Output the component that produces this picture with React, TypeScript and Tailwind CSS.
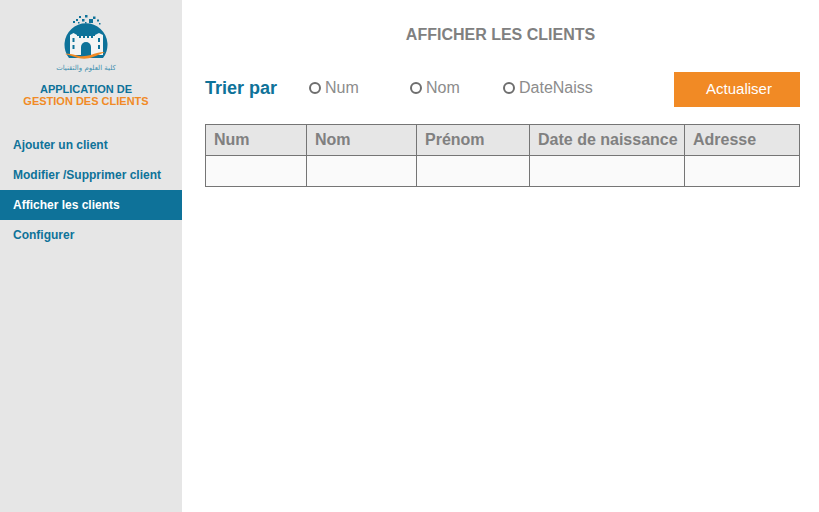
const menuItems = [
  { name: "Ajouter un client" },
  { name: "Modifier /Supprimer client" },
  { name: "Afficher les clients", active: true },
  { name: "Configurer" },
];

const sortOptions = [
  { name: "Num", width: "w-[101px]" },
  { name: "Nom", width: "w-[93px]" },
  { name: "DateNaiss", width: "w-auto" },
];

const columns = [
  { name: "Num", width: "w-[101px]" },
  { name: "Nom", width: "w-[110px]" },
  { name: "Prénom", width: "w-[113px]" },
  { name: "Date de naissance", width: "w-[155px]" },
  { name: "Adresse", width: "w-[115px]" },
];

const Logo = () => (
  <svg width="48" height="46" viewBox="0 0 48 46">
    {/* dots */}
    <g fill="#0e7299">
      <rect x="17" y="2" width="2" height="2" />
      <rect x="23" y="1" width="2.5" height="2.5" />
      <rect x="27" y="5" width="4" height="4" />
      <rect x="20" y="5" width="2.5" height="2.5" />
      <rect x="31" y="2.5" width="2.5" height="2.5" />
      <rect x="14" y="5" width="2" height="2" />
      <rect x="11" y="7" width="2" height="2" />
      <rect x="35" y="5.5" width="2" height="2" />
      <rect x="37" y="9" width="1.5" height="1.5" />
      <rect x="16" y="8" width="1.5" height="1.5" />
      <rect x="23" y="8" width="1.5" height="1.5" />
    </g>
    {/* round badge */}
    <path d="M7 44A21.5 21.5 0 1 1 41 44Z" fill="#0e7299" />
    {/* towers and gate */}
    <path d="M8 21l3.5-2 3.5 2v20H8Z" fill="#f4f4f4" />
    <path d="M33 21l4-2 4 2v20h-8Z" fill="#f4f4f4" />
    <path d="M15 24h18v17H15Z" fill="#f4f4f4" />
    <path d="M15 22h2v2h-2ZM19 22h2v2h-2ZM23 22h2v2h-2ZM27 22h2v2h-2ZM31 22h2v2h-2Z" fill="#f4f4f4" />
    <path d="M19 44V33a5 5 0 0 1 10 0v11Z" fill="#0e7299" />
    <path d="M10.5 24h2v4h-2ZM10.5 31h2v4h-2ZM36 24h2v4h-2ZM36 31h2v4h-2Z" fill="#0e7299" />
    {/* orange wave */}
    <path d="M3 40c5-1 9 1 14 2 8 1 14-2 18-3 3-1 6-1 8-1-4 2-7 3-12 5-5 2-10 2-15 1-4-1-8-3-13-4Z" fill="#f18a25" />
  </svg>
);

export default function App() {
  return (
    <div className="flex h-[512px] w-[819px] bg-white font-['Liberation_Sans',Arial,sans-serif]">
      {/* sidebar */}
      <aside className="h-full w-[182px] shrink-0 bg-[#e6e6e6]">
        <div className="flex flex-col items-center pr-[10px] pt-[14px]">
          <Logo />
          <p className="mt-[3px] text-[7px] leading-[10px] text-[#3f8fae] font-['DejaVu_Sans',sans-serif]" dir="rtl">
            كلية العلوم والتقنيات
          </p>
          <h1 className="mt-[10px] text-center text-[11px] font-bold leading-[12px] text-[#0e7299]">
            APPLICATION DE
            <span className="block text-[#f18a25]">GESTION DES CLIENTS</span>
          </h1>
        </div>
        <nav className="mt-[23px] flex flex-col">
          {menuItems.map((item) => (
            <a
              key={item.name}
              className={`flex h-[30px] items-center pl-[13px] text-xs font-bold ${
                item.active ? "bg-[#0e7299] text-white" : "text-[#0e7299]"
              }`}
            >
              {item.name}
            </a>
          ))}
        </nav>
      </aside>

      {/* main */}
      <main className="flex-1 pl-[23px] pr-[19px] pt-[25px]">
        <h2 className="pr-[4px] pt-[1px] text-center text-base font-bold leading-[18px] text-[#808080]">AFFICHER LES CLIENTS</h2>

        <div className="mt-[28px] flex h-[35px] items-start">
          <span className="w-[104px] text-[18px] font-bold leading-[32px] text-[#0e7299]">Trier par</span>
          {sortOptions.map((option) => (
            <label key={option.name} className={`flex h-[32px] items-center ${option.width}`}>
              <span className="mr-[4px] size-3 rounded-full border-2 border-[#6e6e6e]" />
              <span className="text-base text-[#8c8c8c]">{option.name}</span>
            </label>
          ))}
          <button className="ml-auto h-[35px] w-[126px] bg-[#f18a25] pl-[4px] text-[15px] text-white">Actualiser</button>
        </div>

        <div className="mt-[17px] w-[595px] border-l border-t border-[#757575]">
          <div className="flex h-[31px] bg-[#e6e6e6]">
            {columns.map((col) => (
              <div
                key={col.name}
                className={`flex items-center border-b border-r border-[#757575] pl-[8px] text-base font-bold text-[#808080] ${col.width}`}
              >
                {col.name}
              </div>
            ))}
          </div>
          <div className="flex h-[31px] bg-[#fafafa]">
            {columns.map((col) => (
              <div key={col.name} className={`border-b border-r border-[#757575] ${col.width}`} />
            ))}
          </div>
        </div>
      </main>
    </div>
  );
}
